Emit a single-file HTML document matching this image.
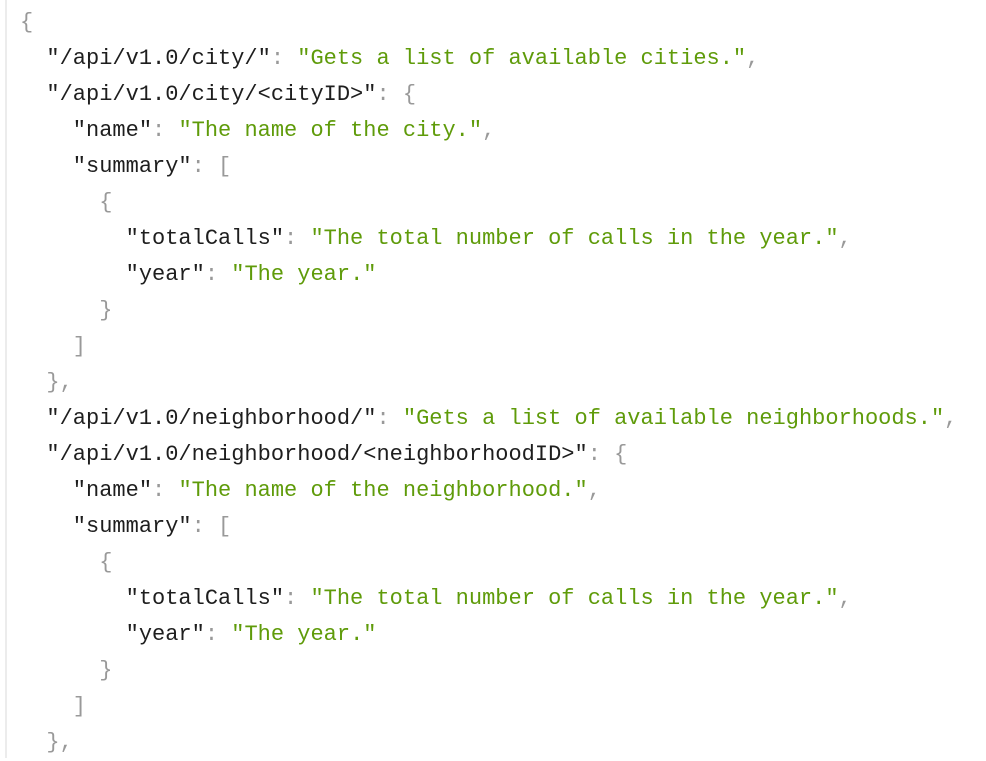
<!DOCTYPE html>
<html><head><meta charset="utf-8"><style>
html,body{margin:0;padding:0;background:#fff;width:986px;height:758px;overflow:hidden}
.bar{position:absolute;left:5px;top:0;width:2px;height:758px;background:#ececec}
pre{position:absolute;left:20px;top:5px;margin:0;font-family:"Liberation Mono",monospace;font-size:22px;line-height:36px;color:#1e1e1e;white-space:pre}
.s{color:#5f9b0a}.p{color:#999}
</style></head><body><div class="bar"></div>
<pre><span class="p">{</span>
  "/api/v1.0/city/"<span class="p">:</span> <span class="s">"Gets a list of available cities."</span><span class="p">,</span>
  "/api/v1.0/city/&lt;cityID&gt;"<span class="p">: {</span>
    "name"<span class="p">:</span> <span class="s">"The name of the city."</span><span class="p">,</span>
    "summary"<span class="p">: [</span>
<span class="p">      {</span>
        "totalCalls"<span class="p">:</span> <span class="s">"The total number of calls in the year."</span><span class="p">,</span>
        "year"<span class="p">:</span> <span class="s">"The year."</span>
<span class="p">      }</span>
<span class="p">    ]</span>
<span class="p">  },</span>
  "/api/v1.0/neighborhood/"<span class="p">:</span> <span class="s">"Gets a list of available neighborhoods."</span><span class="p">,</span>
  "/api/v1.0/neighborhood/&lt;neighborhoodID&gt;"<span class="p">: {</span>
    "name"<span class="p">:</span> <span class="s">"The name of the neighborhood."</span><span class="p">,</span>
    "summary"<span class="p">: [</span>
<span class="p">      {</span>
        "totalCalls"<span class="p">:</span> <span class="s">"The total number of calls in the year."</span><span class="p">,</span>
        "year"<span class="p">:</span> <span class="s">"The year."</span>
<span class="p">      }</span>
<span class="p">    ]</span>
<span class="p">  },</span></pre>
</body></html>
